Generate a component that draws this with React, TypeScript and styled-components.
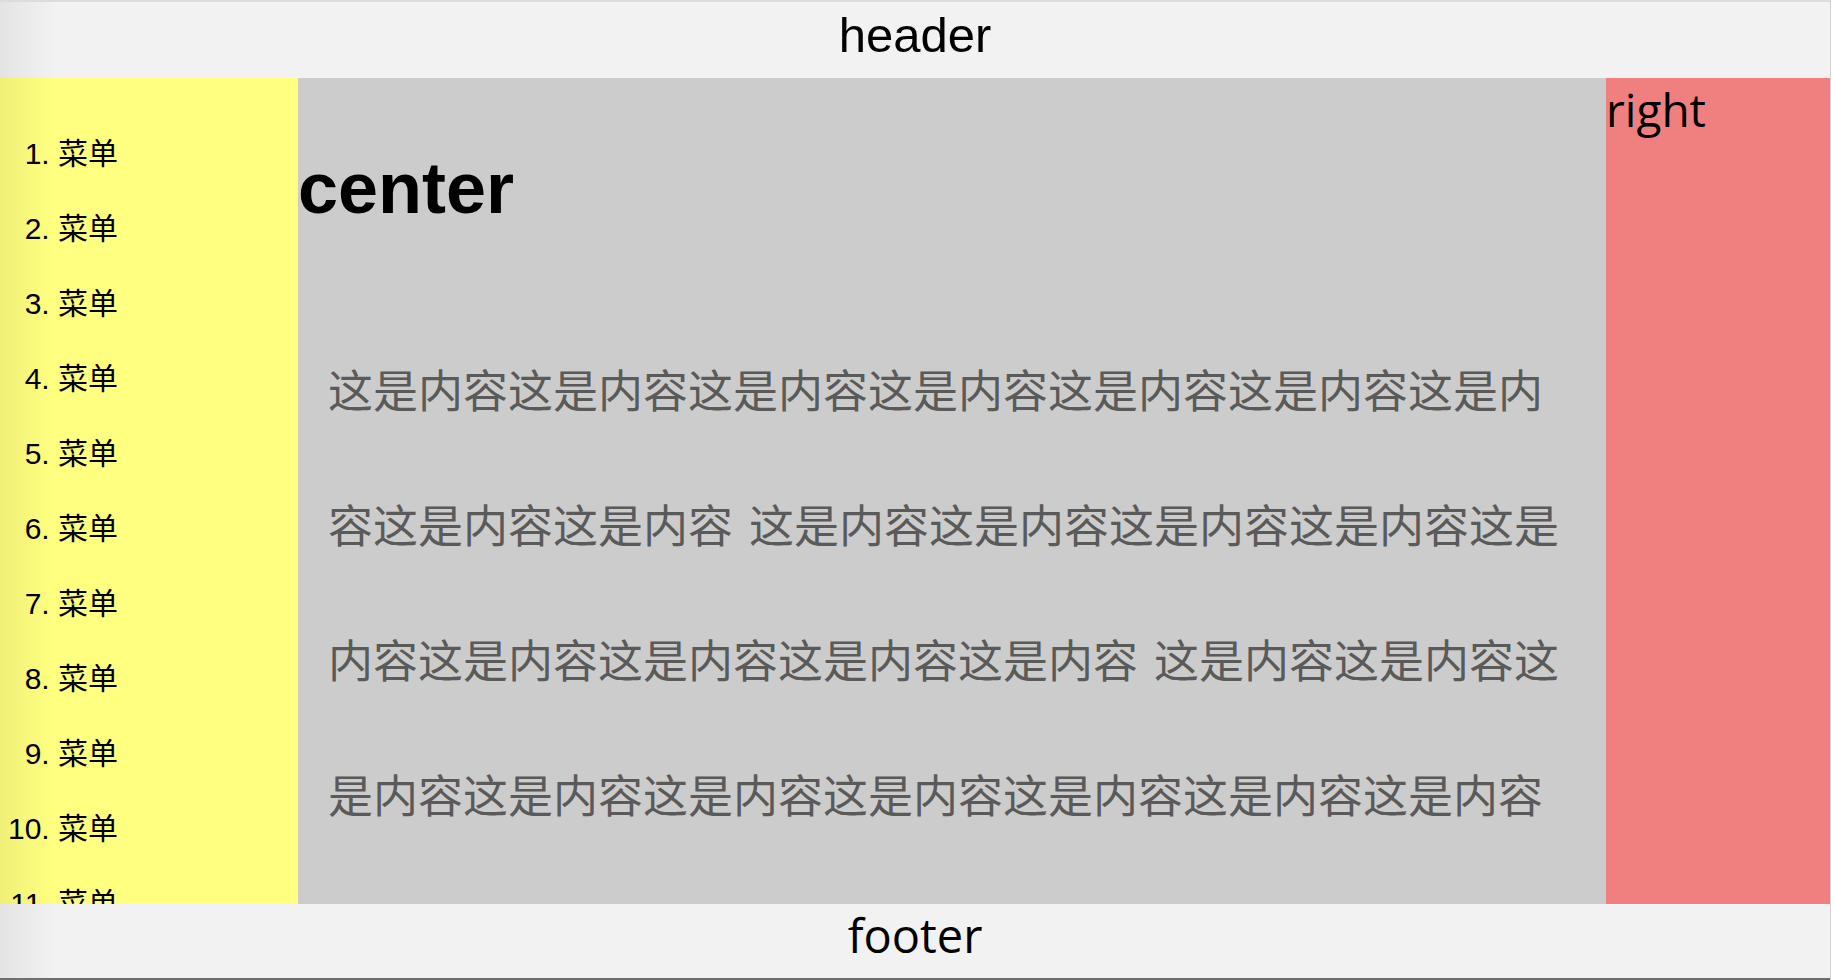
import React from "react";
import styled, { createGlobalStyle } from "styled-components";

const menus = Array.from({ length: 11 }, (_, i) => i + 1);
const chunk = "这是内容".repeat(9);
const content = [chunk, chunk, chunk].join(" ");

const App = () => {
  return (
    <>
      <GlobalStyle />
      <Page>
        <Header>header</Header>
        <Main>
          <Left>
            <Menu>
              {menus.map((n) => (
                <MenuItem key={n}>菜单</MenuItem>
              ))}
            </Menu>
          </Left>
          <Center>
            <Title>center</Title>
            <Content>{content}</Content>
          </Center>
          <Right>right</Right>
        </Main>
        <Footer>footer</Footer>
      </Page>
    </>
  );
};

export default App;

const GlobalStyle = createGlobalStyle`
  html, body {
    margin: 0;
    padding: 0;
    height: 100%;
    background: #ffffff;
  }
  body {
    font-family: "Liberation Sans", "Noto Sans CJK SC", sans-serif;
    color: #000;
  }
  #root {
    height: 100%;
  }
`;

const Page = styled.div`
  position: relative;
  box-sizing: border-box;
  display: flex;
  flex-direction: column;
  width: calc(100% - 4px);
  height: 100vh;
  border-top: 2px solid #dcdce0;
  border-bottom: 2px solid #6e6e6e;
  box-shadow: 1px 0 0 #d2d2d2;
  overflow: hidden;
  &::before {
    content: "";
    position: absolute;
    top: 0;
    bottom: 0;
    left: 0;
    width: 56px;
    background: linear-gradient(to right, rgba(0, 0, 0, 0.06), rgba(0, 0, 0, 0));
    pointer-events: none;
    z-index: 2;
  }
`;

const Header = styled.header`
  flex: none;
  height: 76px;
  line-height: 67px;
  background: #f2f2f2;
  text-align: center;
  font-family: "Liberation Sans", Arial, sans-serif;
  font-size: 49px;
`;

const Footer = styled.footer`
  flex: none;
  height: 74px;
  line-height: 62px;
  background: #f2f2f2;
  text-align: center;
  font-family: "Open Sans", sans-serif;
  font-size: 47px;
`;

const Main = styled.main`
  flex: 1;
  min-height: 0;
  display: flex;
`;

const Left = styled.aside`
  flex: none;
  width: 298px;
  background: #ffff80;
  overflow: hidden;
`;

const Menu = styled.ol`
  margin: 38px 0 0;
  padding-left: 58px;
  font-size: 30px;
  font-family: "Liberation Sans", "Noto Sans CJK SC", sans-serif;
`;

const MenuItem = styled.li`
  height: 75px;
  line-height: 75px;
`;

const Center = styled.section`
  flex: 1;
  min-width: 0;
  background: #cccccc;
  overflow: hidden;
`;

const Title = styled.h1`
  margin: 69px 0 0;
  font-family: "Liberation Sans", Arial, sans-serif;
  font-size: 72px;
  font-weight: bold;
`;

const Content = styled.p`
  margin: 92px 0 0;
  padding: 0 30px;
  font-family: "Noto Sans CJK SC", sans-serif;
  font-size: 45px;
  line-height: 135px;
  word-spacing: 6px;
  color: #5a5a5a;
`;

const Right = styled.aside`
  flex: none;
  width: 224px;
  background: #f08080;
  font-family: "Open Sans", sans-serif;
  font-size: 46px;
`;
